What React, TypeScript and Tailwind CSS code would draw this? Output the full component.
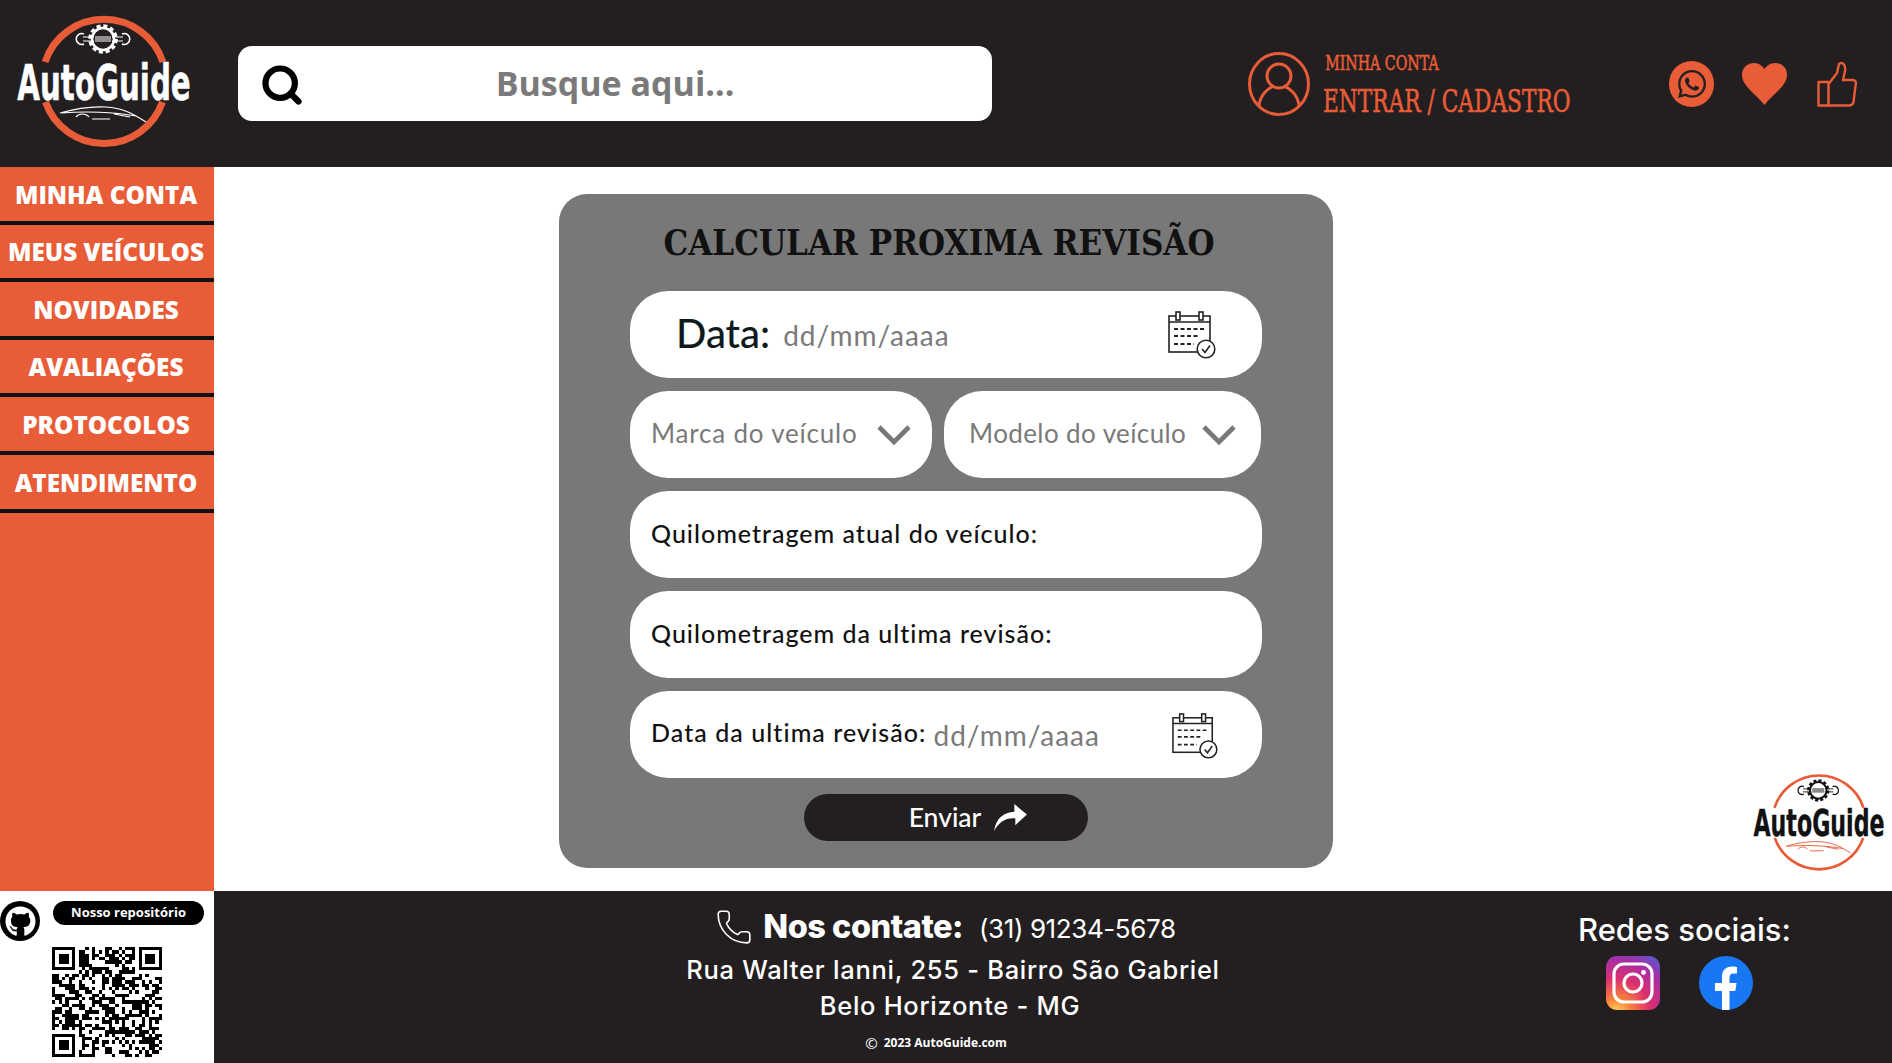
import React from "react";
import { Phone, Search } from "lucide-react";
import { FaGithub, FaWhatsapp } from "react-icons/fa";

const ORANGE = "#e85c37";

function Logo({ textColor, carColor, gearColor, ring, cls }: { textColor: string; carColor: string; gearColor: string; ring: number; cls: string }) {
  return (
    <svg viewBox="0 0 180 135" className={cls} overflow="visible">
      <path d="M31.1 46 A62 62 0 0 1 148.9 46" fill="none" stroke={ORANGE} strokeWidth={ring} />
      <path d="M31.5 86 A62 62 0 0 0 148.5 86" fill="none" stroke={ORANGE} strokeWidth={ring} />
      <g transform="translate(89 23)">
        <circle r="13" fill="none" stroke={gearColor} strokeWidth="3.5" strokeDasharray="4 2.8" />
        <circle r="11" fill="none" stroke={gearColor} strokeWidth="2.6" />
        <rect x="-8" y="-3" width="16" height="6" fill={gearColor} opacity="0.5" />
        <path d="M-20 -2 H-9 M-20 2 H-9 M20 -2 H9 M20 2 H9" stroke={gearColor} strokeWidth="1.2" fill="none" />
        <path d="M-19 -5 A5.5 5.5 0 1 0 -19 5 M19 -5 A5.5 5.5 0 1 1 19 5" stroke={gearColor} strokeWidth="1.6" fill="none" />
      </g>
      <text transform="translate(90 84) scale(0.665 1)" textAnchor="middle" fontFamily="'DejaVu Sans Condensed','DejaVu Sans',sans-serif" fontWeight="700" fontSize="49" fill={textColor} stroke={textColor} strokeWidth="0.5">AutoGuide</text>
      <path d="M46 97 C60 93 76 90 92 91 C108 92 118 97 132 106 M48 97 C70 95 100 96 122 100 M62 101 C65 97 72 97 75 101 M78 103 L96 103 M100 98 L116 101" fill="none" stroke={carColor} strokeWidth="1.2" />
    </svg>
  );
}

function Calendar({ cls }: { cls: string }) {
  return (
    <svg viewBox="0 0 48 48" className={cls} fill="none" stroke="#222" strokeWidth="1.6">
      <rect x="1" y="5" width="41" height="36" />
      <path d="M1 11 H42" />
      <rect x="8" y="1" width="4" height="8" fill="#fff" />
      <rect x="31" y="1" width="4" height="8" fill="#fff" />
      <path d="M6 18 H36 M6 25 H30 M6 33 H26" strokeDasharray="4 2.5" strokeWidth="1.8" />
      <circle cx="38" cy="38" r="8.8" fill="#fff" />
      <path d="M34 38 L37 41.5 L42 34.5" />
    </svg>
  );
}

function Chevron({ cls }: { cls: string }) {
  return (
    <svg viewBox="0 0 34 20" className={cls} fill="none" stroke="#777777" strokeWidth="4.6">
      <path d="M2 2 L17 17 L32 2" />
    </svg>
  );
}

function QR() {
  const n = 33;
  let seed = 20231;
  const cells: string[] = [];
  const inFinder = (x: number, y: number) => (x < 8 && y < 8) || (x >= n - 8 && y < 8) || (x < 8 && y >= n - 8);
  for (let y = 0; y < n; y++) {
    for (let x = 0; x < n; x++) {
      seed = (seed * 1103515245 + 12345) & 0x7fffffff;
      const on = ((seed >> 16) & 3) < 2;
      if (!inFinder(x, y) && on) cells.push(`M${x} ${y}h1v1h-1z`);
    }
  }
  const finder = (x: number, y: number) => `M${x} ${y}h7v7h-7zM${x + 1} ${y + 1}v5h5v-5zM${x + 2} ${y + 2}h3v3h-3z`;
  return (
    <svg viewBox="0 0 33 33" className="w-[110px] h-[110px] block" shapeRendering="crispEdges">
      <path d={cells.join("")} fill="#000" />
      <path d={finder(0, 0) + finder(26, 0) + finder(0, 26)} fill="#000" fillRule="evenodd" />
    </svg>
  );
}

function Instagram() {
  return (
    <svg viewBox="0 0 54 54" className="w-[54px] h-[54px]">
      <defs>
        <radialGradient id="ig" cx="0.2" cy="1.05" r="1.25">
          <stop offset="0" stopColor="#fdd863" />
          <stop offset="0.2" stopColor="#f9873a" />
          <stop offset="0.5" stopColor="#dc2f6e" />
          <stop offset="0.8" stopColor="#a42ea8" />
          <stop offset="1" stopColor="#5a5bd0" />
        </radialGradient>
      </defs>
      <rect width="54" height="54" rx="11" fill="url(#ig)" />
      <rect x="8" y="8" width="38" height="38" rx="10" fill="none" stroke="#fff" strokeWidth="3.2" />
      <circle cx="27" cy="27" r="9" fill="none" stroke="#fff" strokeWidth="3.2" />
      <circle cx="37.5" cy="16.5" r="2.4" fill="#fff" />
    </svg>
  );
}

function Facebook() {
  return (
    <svg viewBox="0 0 54 54" className="w-[54px] h-[54px]">
      <circle cx="27" cy="27" r="27" fill="#1877f2" />
      <path d="M23 54 V35 H16 V27 H23 V21 C23 14 27 10.5 33 10.5 C35.5 10.5 38 11 38 11 V17.5 H34.5 C31.5 17.5 30.5 19.5 30.5 21.5 V27 H37.5 L36.3 35 H30.5 V54 Z" fill="#fff" />
    </svg>
  );
}

const menu = ["MINHA CONTA", "MEUS VEÍCULOS", "NOVIDADES", "AVALIAÇÕES", "PROTOCOLOS", "ATENDIMENTO"];

const pillCls = "bg-white rounded-[38px] h-[87px] flex items-center";
const spartan = "font-['Lato','Noto_Sans',sans-serif]";

export default function App() {
  return (
    <div className="w-[1892px] h-[1063px] flex flex-col overflow-hidden bg-white font-['Open_Sans',sans-serif]">
      <header className="h-[167px] shrink-0 bg-[#231f20] flex items-center">
        <div className="w-[238px] shrink-0 pl-[14px]">
          <Logo textColor="#ffffff" carColor="#ffffff" gearColor="#ffffff" ring={7} cls="w-[180px] h-[135px]" />
        </div>
        <div className="relative w-[754px] h-[75px] shrink-0 bg-white rounded-[14px] flex items-center justify-center">
          <Search className="absolute left-[22px] top-[17px] w-[44px] h-[44px]" color="#000" strokeWidth={3.4} />
          <span className="text-[34px] font-bold text-[#7a7a7a]">Busque aqui...</span>
        </div>
        <div className="ml-[256px] flex items-center shrink-0">
          <svg viewBox="0 0 62 64" className="w-[62px] h-[64px] shrink-0" fill="none" stroke={ORANGE} strokeWidth="3">
            <ellipse cx="31" cy="32" rx="29.5" ry="30.5" />
            <circle cx="31" cy="24" r="12" />
            <path d="M11 54 C12 42 21 36 26 34 M51 54 C50 42 41 36 36 34" />
          </svg>
          <div className="ml-[13px] mt-[4px] w-[250px] flex flex-col text-[#e85c37] font-['DejaVu_Serif',serif] whitespace-nowrap [-webkit-text-stroke:0.6px_#e85c37]">
            <span className="block text-[20px] leading-[24px] pl-[3px] origin-left scale-x-[0.71]">MINHA CONTA</span>
            <span className="block text-[31px] leading-[38px] mt-[7px] origin-left scale-x-[0.70]">ENTRAR / CADASTRO</span>
          </div>
        </div>
        <div className="ml-[96px] flex items-center shrink-0">
          <div className="w-[45px] h-[46px] rounded-full bg-[#e85c37] flex items-center justify-center">
            <FaWhatsapp className="w-[32px] h-[32px] text-[#231f20]" />
          </div>
          <svg viewBox="0 0 45 42" className="ml-[28px] w-[45px] h-[42px]" fill={ORANGE}>
            <path d="M22.5 42 C15 32 0 23 0 12 C0 4 6 0 12 0 C17 0 20.5 3 22.5 6 C24.5 3 28 0 33 0 C39 0 45 4 45 12 C45 23 30 32 22.5 42 Z" />
          </svg>
          <svg viewBox="0 0 40 46" className="ml-[30px] w-[40px] h-[46px]" fill="none" stroke={ORANGE} strokeWidth="2.4" strokeLinejoin="round">
            <rect x="1.5" y="21" width="10" height="23.5" />
            <path d="M11.5 23 L20 12 L22 3 C26 0 29 5 28 10 L26 19 H36 C39 19 39.5 22 38.5 25 L36.5 41 C36 43.5 34.5 44.5 32 44.5 H11.5" />
          </svg>
        </div>
      </header>

      <div className="flex-1 flex min-h-0">
        <nav className="w-[214px] shrink-0 bg-[#e85c37] flex flex-col">
          {menu.map((m) => (
            <div key={m} className="h-[57.6px] pt-[2px] pr-[2px] border-b-4 border-[#111] flex items-center justify-center text-white text-[24.3px] font-extrabold whitespace-nowrap">
              {m}
            </div>
          ))}
        </nav>
        <main className="relative flex-1 bg-white pl-[345px] pt-[27px]">
          <section className="w-[774px] h-[674px] bg-[#787878] rounded-[28px] px-[71px] flex flex-col">
            <h1 className="h-[97px] pt-[20px] pr-[14px] text-center text-[34.6px] leading-[58px] font-bold text-[#111] whitespace-nowrap font-['DejaVu_Serif_Condensed','DejaVu_Serif',serif]">
              CALCULAR PROXIMA REVISÃO
            </h1>
            <div className={`${spartan} flex flex-col gap-[13px]`}>
              <div className={`${pillCls} pl-[46px] pr-[46px] justify-between`}>
                <div className="flex items-center">
                  <span className="text-[40px] font-medium text-[#0f1a1c] -mt-[3px]">Data:</span>
                  <span className="ml-[13px] text-[28px] text-[#7a7a7a] tracking-[1px]">dd/mm/aaaa</span>
                </div>
                <Calendar cls="w-[48px] h-[48px]" />
              </div>
              <div className="flex gap-[12px]">
                <div className={`${pillCls} w-[302px] pl-[21px] pr-[21px] justify-between`}>
                  <span className="text-[26px] text-[#7a7a7a] tracking-[0.8px] -mt-[2px]">Marca do veículo</span>
                  <Chevron cls="w-[34px] h-[20px]" />
                </div>
                <div className={`${pillCls} w-[317px] pl-[25px] pr-[25px] justify-between`}>
                  <span className="text-[26px] text-[#7a7a7a] tracking-[0.4px] -mt-[2px]">Modelo do veículo</span>
                  <Chevron cls="w-[34px] h-[20px]" />
                </div>
              </div>
              <div className={`${pillCls} pl-[21px]`}>
                <span className="text-[25px] font-medium text-[#111] tracking-[1px] -mt-[2px]">Quilometragem atual do veículo:</span>
              </div>
              <div className={`${pillCls} pl-[21px]`}>
                <span className="text-[25px] font-medium text-[#111] tracking-[1px] -mt-[2px]">Quilometragem da ultima revisão:</span>
              </div>
              <div className={`${pillCls} pl-[21px] pr-[44px] justify-between`}>
                <div className="flex items-center">
                  <span className="text-[25px] font-medium text-[#111] tracking-[1.07px] -mt-[3px]">Data da ultima revisão:</span>
                  <span className="ml-[7px] text-[28px] text-[#7a7a7a] tracking-[1px]">dd/mm/aaaa</span>
                </div>
                <Calendar cls="w-[46px] h-[46px] mt-[3px]" />
              </div>
            </div>
            <div className={`${spartan} mt-[16px] self-center w-[284px] h-[47px] pl-[44px] rounded-[24px] bg-[#231f20] flex items-center justify-center gap-[13px] text-white text-[26.5px] font-medium`}>
              <span>Enviar</span>
              <svg viewBox="0 0 34 28" className="w-[33px] h-[27px]" fill="#fff">
                <path d="M0 28 C2 14 10 9 21 8 V0 L34 11 L22 22 V15 C12 14 5 19 0 28 Z" />
              </svg>
            </div>
          </section>
          <Logo textColor="#111111" carColor={ORANGE} gearColor="#111111" ring={3.5} cls="absolute right-[5px] top-[606px] w-[136px] h-[102px]" />
        </main>
      </div>

      <footer className="h-[172px] shrink-0 bg-[#231f20] flex">
        <div className="w-[214px] shrink-0 bg-white flex flex-col">
          <div className="flex pt-[10px]">
            <div className="w-[40px] h-[40px] rounded-full bg-black flex items-center justify-center">
              <FaGithub className="w-[31px] h-[31px] text-white" />
            </div>
            <div className="ml-[13px] w-[151px] h-[24px] rounded-[12px] bg-black text-white text-[13px] font-bold flex items-center justify-center">
              Nosso repositório
            </div>
          </div>
          <div className="ml-[52px] mt-[6px]">
            <QR />
          </div>
        </div>
        <div className="ml-[386px] w-[706px] flex flex-col items-center text-white font-['Inter',sans-serif]">
          <div className="flex items-center h-[60px] pt-[12px] mr-[15px]">
            <Phone className="w-[38px] h-[38px] text-white" strokeWidth={1} />
            <span className="ml-[10px] text-[32.5px] font-extrabold tracking-[-0.5px]">Nos contate:</span>
            <span className="ml-[16px] text-[26px] font-normal tracking-[-0.4px] mt-[3px]">(31) 91234-5678</span>
          </div>
          <div className="text-[25.5px] leading-[36px] font-medium tracking-[0.7px] mt-[1px] whitespace-nowrap">Rua Walter Ianni, 255 - Bairro São Gabriel</div>
          <div className="text-[25.5px] leading-[36px] font-medium tracking-[0.7px] mr-[6px] whitespace-nowrap">Belo Horizonte - MG</div>
          <div className="flex items-center text-[12px] font-bold mt-[8px] mr-[34px] font-['Open_Sans',sans-serif]">
            <span className="text-[15px] font-normal mr-[6px]">©</span>2023 AutoGuide.com
          </div>
        </div>
        <div className="ml-[272px] flex flex-col items-center pt-[20px] font-['Inter',sans-serif]">
          <span className="text-white text-[31px] font-medium leading-[38px] whitespace-nowrap">Redes sociais:</span>
          <div className="flex gap-[39px] mt-[7px] mr-[10px]">
            <Instagram />
            <Facebook />
          </div>
        </div>
      </footer>
    </div>
  );
}
